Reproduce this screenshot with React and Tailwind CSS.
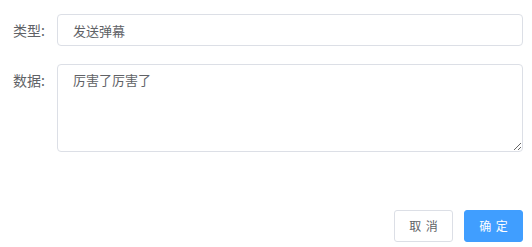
import React from "react";

const font = { fontFamily: '"Noto Sans CJK SC", "Liberation Sans", sans-serif' };

export default function App() {
  return (
    <div className="w-[532px] h-[247px] bg-white text-[#606266]" style={font}>
      <div className="pt-[14px] pr-[9px]">
        <div className="flex items-center h-8">
          <label className="w-[57px] pr-3 text-right text-sm leading-8 shrink-0">类型:</label>
          <input
            className="flex-1 h-8 border border-[#dcdfe6] rounded px-[15px] text-[13px] text-[#606266] outline-none"
            defaultValue="发送弹幕"
          />
        </div>

        <div className="flex mt-[18px]">
          <label className="w-[57px] pr-3 text-right text-sm leading-8 shrink-0">数据:</label>
          <textarea
            className="flex-1 h-[88px] border border-[#dcdfe6] rounded px-[15px] py-[5px] text-[13px] leading-[1.5] text-[#606266] outline-none resize-y"
            defaultValue="厉害了厉害了"
          />
        </div>

        <div className="flex justify-end gap-[11px] mt-[58px]">
          <button className="h-8 w-[59px] border border-[#dcdfe6] rounded-[3px] bg-white text-xs text-[#606266] [word-spacing:2px]">
            取 消
          </button>
          <button className="h-8 w-[59px] border border-[#409eff] rounded-[3px] bg-[#409eff] text-xs text-white [word-spacing:2px]">
            确 定
          </button>
        </div>
      </div>
    </div>
  );
}
